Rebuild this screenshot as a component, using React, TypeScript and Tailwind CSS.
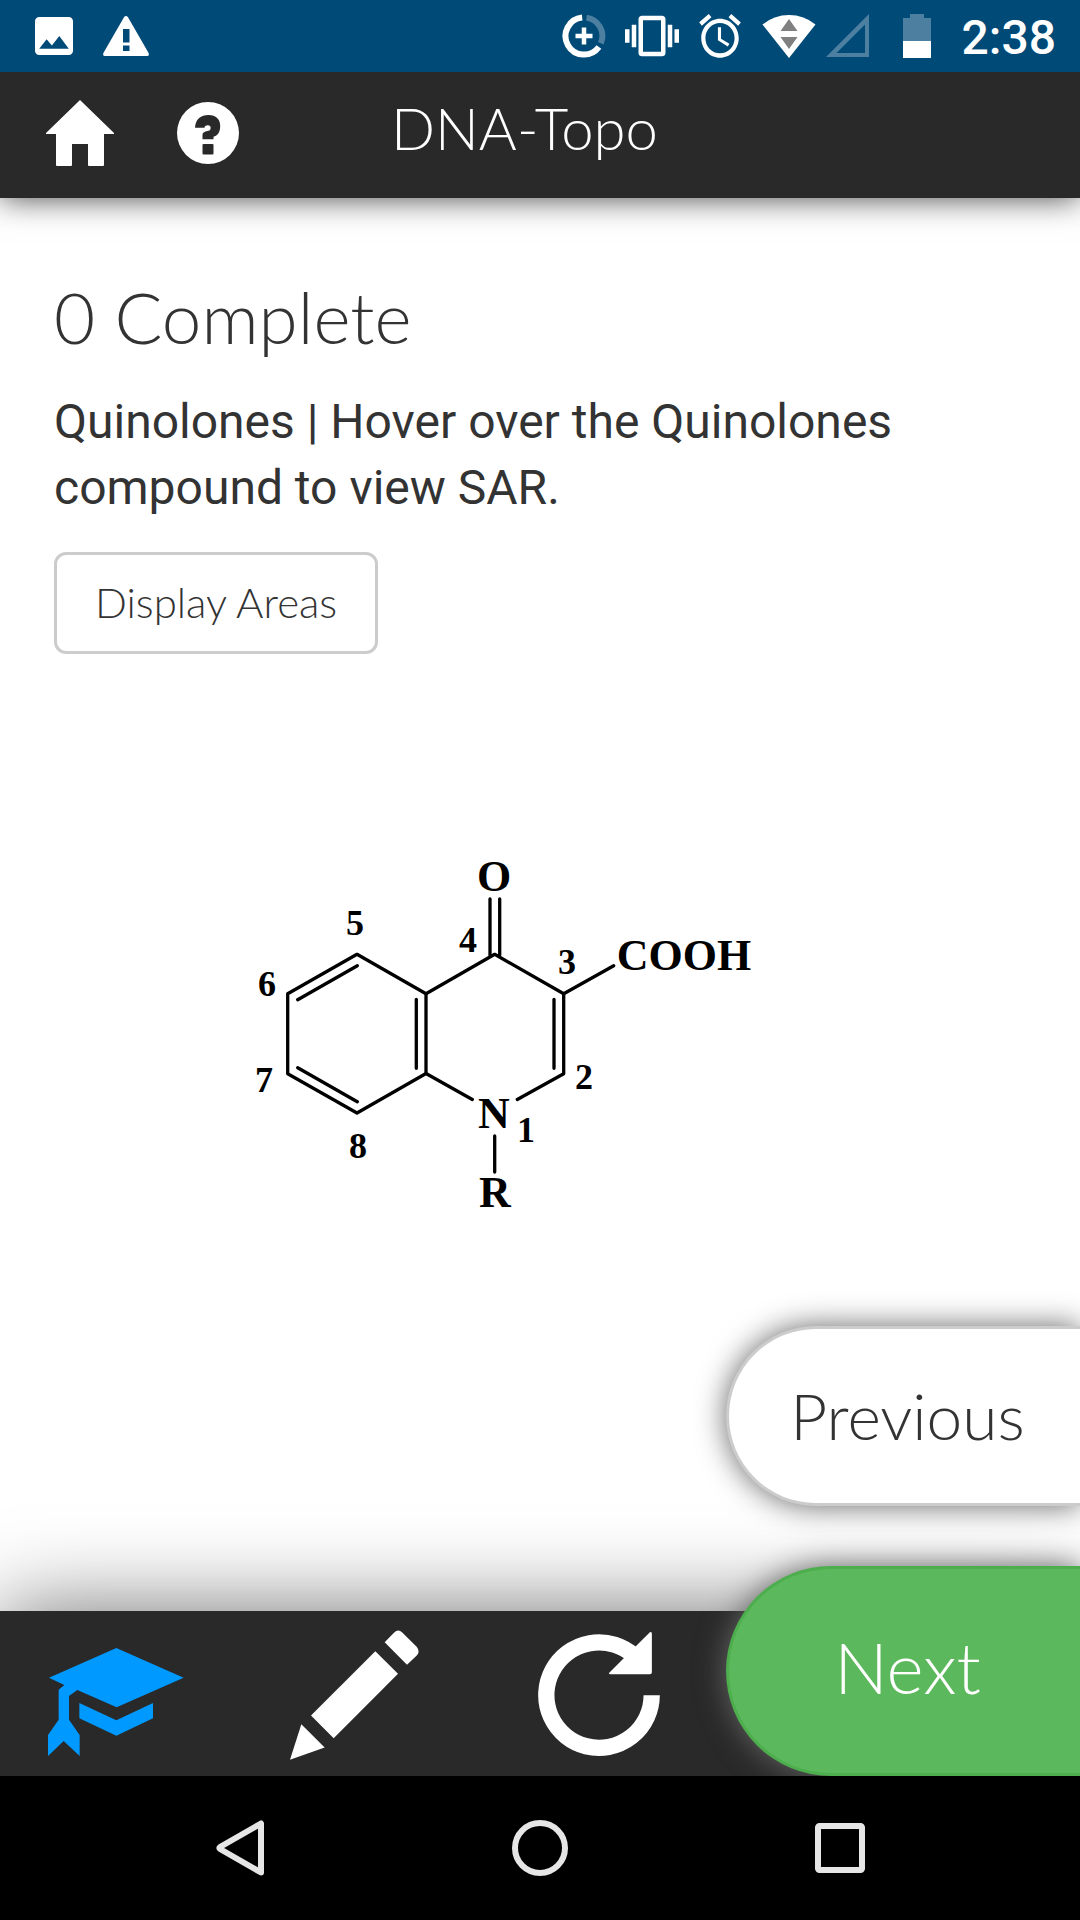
import React from "react";

const lato = "font-['Lato',sans-serif] font-light";

function StatusBar() {
  return (
    <div className="relative z-20 flex h-[72px] shrink-0 items-center bg-[#004a78] pl-[35px] pr-[24px] text-white">
      <svg className="h-[38px] w-[38px]" viewBox="3 3 18 18" fill="currentColor" aria-hidden="true">
        <path d="M21 19V5c0-1.1-.9-2-2-2H5c-1.1 0-2 .9-2 2v14c0 1.1.9 2 2 2h14c1.1 0 2-.9 2-2zM8.500 13.500l2.500 3.010L14.500 12l4.500 6H5l3.500-4.500z" />
      </svg>
      <svg className="ml-[30px] h-[40px] w-[46px]" viewBox="0 0 46 40" fill="currentColor" aria-hidden="true">
        <path fillRule="evenodd" d="M21 1.200Q23 -1.200 25 1.200L45.600 37Q46.600 40 44 40H2Q-.6 40 .4 37ZM20 13V26.500H26.500V13ZM20 29.500V35H26.500V29.500Z" />
      </svg>

      <div className="ml-auto flex items-center">
        <svg className="h-[44px] w-[44px]" viewBox="0 0 44 44" fill="none" stroke="currentColor" strokeWidth="6" aria-hidden="true">
          <path d="M20.200 3.600A18.500 18.500 0 1 0 36.900 33" />
          <path opacity=".3" d="M24.500 3.600A18.500 18.500 0 0 1 38.800 29.300" />
          <path strokeWidth="4.500" d="M13.500 22H30.500M22 13.500V30.500" />
        </svg>
        <svg className="ml-[19px] h-[54px] w-[54px]" viewBox="0 0 24 24" fill="currentColor" aria-hidden="true">
          <path d="M0 15h2V9H0v6zm3 2h2V7H3v10zm19-8v6h2V9h-2zm-3 8h2V7h-2v10zM16.500 3h-9C6.670 3 6 3.670 6 4.500v15c0 .83.67 1.500 1.500 1.500h9c.83 0 1.500-.67 1.500-1.500v-15c0-.83-.67-1.500-1.500-1.500zM16 19H8V5h8v14z" />
        </svg>
        <svg className="ml-[16px] h-[52px] w-[50px]" viewBox="0 0 24 24" preserveAspectRatio="none" fill="currentColor" aria-hidden="true">
          <path d="M22 5.720l-4.600-3.860-1.290 1.530 4.600 3.860L22 5.720zM7.880 3.390L6.600 1.860 2 5.710l1.290 1.530 4.590-3.850zM12.500 8H11v6l4.750 2.850.75-1.230-4-2.370V8zM12 4c-4.970 0-9 4.030-9 9s4.020 9 9 9c4.970 0 9-4.030 9-9s-4.030-9-9-9zm0 16c-3.870 0-7-3.130-7-7s3.130-7 7-7 7 3.130 7 7-3.130 7-7 7z" />
        </svg>
        <svg className="ml-[17px] h-[44px] w-[54px]" viewBox="0 0 54 44" aria-hidden="true">
          <path fill="#fff" d="M.500 10.500Q12 1 27 1Q42 1 53.500 10.500L27 44Z" />
          <path fill="#808080" d="M27 5L35.500 17H18.500ZM18.500 23H35.500L27 35Z" />
        </svg>
        <svg className="ml-[10px] h-[44px] w-[44px]" viewBox="0 0 44 44" aria-hidden="true">
          <path fill="#fff" fillOpacity=".3" fillRule="evenodd" d="M43 0V43H0ZM39 10.500L10.500 39H39Z" />
        </svg>
        <svg className="ml-[33px] h-[44px] w-[28px]" viewBox="0 0 28 44" fill="currentColor" aria-hidden="true">
          <path opacity=".3" d="M7 0H21V4H28V27H0V4H7Z" />
          <path d="M0 27H28V44H0Z" />
        </svg>
        <span className="ml-[31px] pt-[4px] font-['Roboto',sans-serif] text-[48px] font-medium leading-[68px]">2:38</span>
      </div>
    </div>
  );
}

function Header() {
  return (
    <header className="relative z-10 flex h-[126px] shrink-0 items-center bg-[#292929] pb-[4px] pl-[46px] text-white shadow-[0_0_30px_#444]">
      <button type="button" aria-label="Home" className="shrink-0">
        <svg className="h-[66px] w-[68px]" viewBox="0 0 68 66" fill="currentColor" aria-hidden="true">
          <path d="M34 0L68 33V34H58V65Q58 66 57 66H43Q42 66 42 65V44H26V65Q26 66 25 66H11Q10 66 10 65V34H0V33Z" />
        </svg>
      </button>
      <button type="button" aria-label="Help" className="ml-[63px] shrink-0">
        <svg className="h-[62px] w-[62px]" viewBox="0 0 62 62" aria-hidden="true">
          <circle cx="31" cy="31" r="31" fill="#fff" />
          <path fill="#292929" d="M18 25.700C18.500 17 24 13 31.500 13C39 13 43.200 17 43.200 24C43.200 31 40 34 36.500 34.700V37.300H25.500V33C25.500 30 29 29.200 31.500 28.800C34.500 28 34.500 23.200 31 23.200C28.500 23.200 27.500 24.300 27.500 25.700Z" />
          <rect x="25.500" y="42" width="11" height="10.500" rx="1" fill="#292929" />
        </svg>
      </button>
      <h1 className={`${lato} ml-[152px] whitespace-nowrap pb-[10px] text-[58px] leading-[72px]`}>DNA-Topo</h1>
    </header>
  );
}

function Quinolone() {
  return (
    <svg className="mx-auto mt-[186px] block w-[600px] max-w-full" viewBox="240 840 600 390" role="img" aria-label="Quinolone structure with numbered positions">
      <g fill="none" stroke="#000" strokeWidth="3.300" strokeLinecap="round" strokeLinejoin="round">
        <path d="M357 954.300L287.700 993.700V1073.700L357 1113L426 1073.500V993.700Z" />
        <path d="M357.300 965.700L297.700 999.700M297.700 1067.700L357.300 1101.700M416.300 999.300V1068.300" />
        <path d="M426 993.700L494.700 954.300L563.700 993.700V1073.700L517.300 1099.500M426 1073.500L472.300 1099.500" />
        <path d="M554 999.300V1068.300M490 899V955M499.700 899V955M494.700 1136V1172M563.700 993.700L613.700 965.700" />
      </g>
      <g className="font-['Liberation_Serif',serif] text-[44px] font-bold" textAnchor="middle">
        <text x="494" y="891">O</text>
        <text x="494" y="1128">N</text>
        <text x="495" y="1207">R</text>
        <text x="684" y="970">COOH</text>
      </g>
      <g className="font-['Liberation_Serif',serif] text-[36px] font-bold" textAnchor="middle">
        <text x="526" y="1142">1</text>
        <text x="584" y="1089">2</text>
        <text x="567" y="974">3</text>
        <text x="468" y="952">4</text>
        <text x="355" y="935">5</text>
        <text x="267" y="996">6</text>
        <text x="264" y="1092">7</text>
        <text x="358" y="1158">8</text>
      </g>
    </svg>
  );
}

function Toolbar() {
  return (
    <footer className="relative flex h-[165px] shrink-0 items-end bg-[#292929] pb-[20px] pl-[48px] text-white shadow-[0_0_90px_#717171]">
      <button type="button" aria-label="Learn" className="shrink-0 text-[#0099ff]">
        <svg className="h-[108px] w-[136px]" viewBox="144 263 408 324" fill="currentColor" aria-hidden="true">
          <path d="M349 263L551 352L350 441L232 389L207 407V478L239 524V587L191 542L144 587V524L176 478V388L193 374L147 352Z" />
          <path d="M238 428L349 480L459 428V474L349 526L238 474Z" />
        </svg>
      </button>
      <button type="button" aria-label="Write" className="-mb-1 ml-[106px] shrink-0">
        <svg className="h-[130px] w-[129px]" viewBox="871 211 387 389" fill="currentColor" aria-hidden="true">
          <path d="M905 493L975 563L871 600Z" />
          <path d="M1127 274L1195 342L1002 535L934 467Z" />
          <path d="M1155 247L1183 219Q1195 206 1207 217L1251 261Q1262 275 1252 286L1222 315Z" />
        </svg>
      </button>
      <button type="button" aria-label="Restart" className="ml-[119px] shrink-0">
        <svg className="h-[124px] w-[122px]" viewBox="354 215 366 373" aria-hidden="true">
          <path fill="none" stroke="#fff" strokeWidth="49" d="M695.500 405A158.500 158.500 0 1 1 643 287" />
          <path fill="#fff" d="M567 338L690 216Q696 213 696 220V336Q696 342 690 342H571Q566 342 567 338Z" />
        </svg>
      </button>

      <div className="absolute bottom-0 right-0 flex w-[354px] flex-col gap-[60px]">
        <button
          type="button"
          className={`${lato} h-[180px] rounded-l-full border-[3px] border-r-0 border-[#ccc] bg-white pl-1.5 text-[64px] text-[#333] shadow-[0_0_30px_#666]`}
        >
          Previous
        </button>
        <button
          type="button"
          className={`${lato} h-[210px] rounded-l-full border-[3px] border-r-0 border-[#4cae4c] bg-[#5cb85c] pb-2 pl-1.5 text-[71px] text-white shadow-[0_0_30px_#666]`}
        >
          Next
        </button>
      </div>
    </footer>
  );
}

function NavigationBar() {
  return (
    <nav className="relative z-10 grid h-[144px] shrink-0 grid-cols-3 items-center justify-items-center bg-black px-[90px]">
      <button type="button" aria-label="Back">
        <svg className="h-[56px] w-[48px]" viewBox="0 0 48 56" fill="none" stroke="#e6e6e6" strokeWidth="6" strokeLinejoin="round" aria-hidden="true">
          <path d="M45 3.500V52.500L4 29Q3 28 4 27Z" />
        </svg>
      </button>
      <button type="button" aria-label="Home screen">
        <svg className="h-[56px] w-[56px]" viewBox="0 0 56 56" fill="none" stroke="#e6e6e6" strokeWidth="6" aria-hidden="true">
          <circle cx="28" cy="28" r="25" />
        </svg>
      </button>
      <button type="button" aria-label="Recent apps">
        <svg className="h-[50px] w-[50px]" viewBox="0 0 50 50" fill="none" stroke="#e6e6e6" strokeWidth="6" aria-hidden="true">
          <rect x="3" y="3" width="44" height="44" rx="1.500" />
        </svg>
      </button>
    </nav>
  );
}

export default function App() {
  return (
    <div className="flex min-h-screen flex-col overflow-hidden bg-white">
      <StatusBar />
      <Header />
      <main className="flex-1 text-[#333]">
        <div className="px-[54px] pt-[77px]">
          <h2 className={`${lato} text-[71px] leading-[84px]`}>0 Complete</h2>
          <p className="mt-[30px] font-['Roboto',sans-serif] text-[48px] leading-[66px]">
            Quinolones | Hover over the Quinolones compound to view SAR.
          </p>
          <button type="button" className={`${lato} mt-[31px] h-[102px] rounded-xl border-[3px] border-[#ccc] px-[38px] pb-[2px] text-[42px]`}>
            Display Areas
          </button>
        </div>
        <Quinolone />
      </main>
      <Toolbar />
      <NavigationBar />
    </div>
  );
}
